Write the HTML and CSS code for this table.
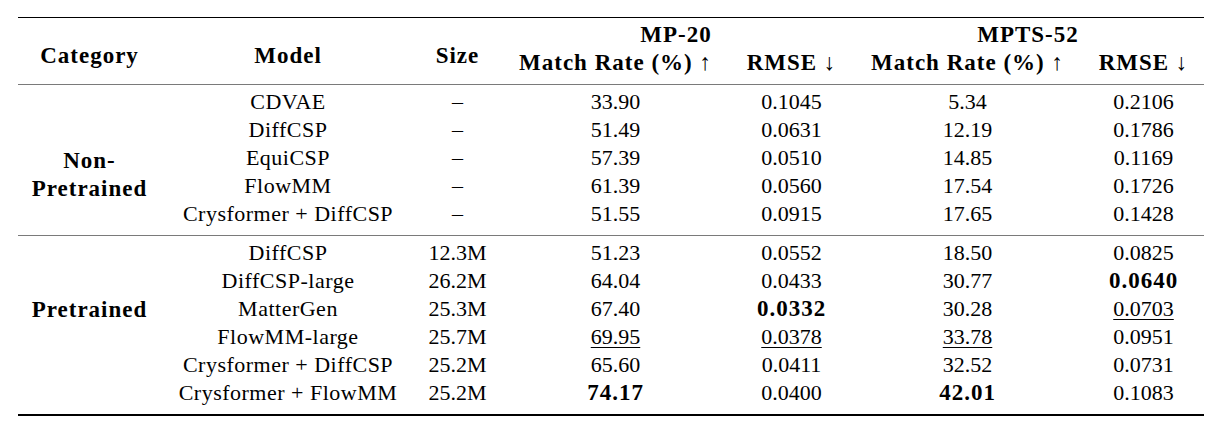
FILE: index.html
```html
<!DOCTYPE html>
<html lang="en">
<head>
<meta charset="utf-8">
<title>Results</title>
<link rel="stylesheet" href="styles.css">
</head>
<body>
<table class="results">
  <colgroup>
    <col class="c-cat"><col class="c-model"><col class="c-size">
    <col class="c-mr"><col class="c-rmse"><col class="c-mr"><col class="c-rmse">
  </colgroup>
  <thead>
    <tr class="hr1">
      <th rowspan="2" class="hspan">Category</th>
      <th rowspan="2" class="hspan">Model</th>
      <th rowspan="2" class="hspan">Size</th>
      <th colspan="2">MP-20</th>
      <th colspan="2">MPTS-52</th>
    </tr>
    <tr class="hr2">
      <th>Match Rate (%) ↑</th>
      <th>RMSE ↓</th>
      <th>Match Rate (%) ↑</th>
      <th>RMSE ↓</th>
    </tr>
  </thead>
  <tbody class="grp grp-non">
    <tr class="first">
      <td rowspan="5" class="cat cat-non">Non-<br>Pretrained</td>
      <td class="model">CDVAE</td><td class="size">–</td>
      <td>33.90</td><td>0.1045</td><td>5.34</td><td>0.2106</td>
    </tr>
    <tr>
      <td class="model">DiffCSP</td><td class="size">–</td>
      <td>51.49</td><td>0.0631</td><td>12.19</td><td>0.1786</td>
    </tr>
    <tr>
      <td class="model">EquiCSP</td><td class="size">–</td>
      <td>57.39</td><td>0.0510</td><td>14.85</td><td>0.1169</td>
    </tr>
    <tr>
      <td class="model">FlowMM</td><td class="size">–</td>
      <td>61.39</td><td>0.0560</td><td>17.54</td><td>0.1726</td>
    </tr>
    <tr class="last">
      <td class="model">Crysformer + DiffCSP</td><td class="size">–</td>
      <td>51.55</td><td>0.0915</td><td>17.65</td><td>0.1428</td>
    </tr>
  </tbody>
  <tbody class="grp grp-pre">
    <tr class="first">
      <td rowspan="6" class="cat cat-pre">Pretrained</td>
      <td class="model">DiffCSP</td><td class="size">12.3M</td>
      <td>51.23</td><td>0.0552</td><td>18.50</td><td>0.0825</td>
    </tr>
    <tr>
      <td class="model">DiffCSP-large</td><td class="size">26.2M</td>
      <td>64.04</td><td>0.0433</td><td>30.77</td><td><b class="best">0.0640</b></td>
    </tr>
    <tr>
      <td class="model">MatterGen</td><td class="size">25.3M</td>
      <td>67.40</td><td><b class="best">0.0332</b></td><td>30.28</td><td><span class="second">0.0703</span></td>
    </tr>
    <tr>
      <td class="model">FlowMM-large</td><td class="size">25.7M</td>
      <td><span class="second">69.95</span></td><td><span class="second">0.0378</span></td><td><span class="second">33.78</span></td><td>0.0951</td>
    </tr>
    <tr>
      <td class="model">Crysformer + DiffCSP</td><td class="size">25.2M</td>
      <td>65.60</td><td>0.0411</td><td>32.52</td><td>0.0731</td>
    </tr>
    <tr class="last">
      <td class="model">Crysformer + FlowMM</td><td class="size">25.2M</td>
      <td><b class="best">74.17</b></td><td>0.0400</td><td><b class="best">42.01</b></td><td>0.1083</td>
    </tr>
  </tbody>
</table>
</body>
</html>
```

FILE: styles.css
```css
html, body {
  margin: 0;
  padding: 0;
  background: #ffffff;
}

body {
  font-family: "Liberation Serif", "Times New Roman", serif;
  font-size: 22px;
  color: #000;
}

.results {
  margin: 17px 0 0 18px;
  width: 1186px;
  table-layout: fixed;
  border-collapse: collapse;
  border-top: 1.5px solid #000;
  border-bottom: 2px solid #000;
}

.c-cat { width: 143px; }
.c-model { width: 254px; }
.c-size { width: 85px; }
.c-mr { width: 231px; }
.c-rmse { width: 121px; }

.results th,
.results td {
  padding: 0;
  line-height: 28px;
  text-align: center;
  vertical-align: middle;
  white-space: nowrap;
}

.results th {
  font-weight: 700;
  font-size: 23px;
  letter-spacing: 1px;
}

.results thead {
  border-bottom: 1px solid #7a7a7a;
}

.hr1 th { padding-top: 3px; }
.hr2 th { padding-bottom: 7px; }
.hr1 th.hspan { padding-top: 10px; }

.grp-non {
  border-bottom: 1px solid #7a7a7a;
}

.grp .first td { padding-top: 3px; }
.grp-non .last td { padding-bottom: 7px; }
.grp-pre .last td { padding-bottom: 7px; }

.results td.model {
  letter-spacing: 0.5px;
}

.results td.cat {
  font-weight: 700;
  font-size: 23px;
  letter-spacing: 1px;
  line-height: 28px;
}

.results td.cat-non { padding-top: 30px; }
.results td.cat-pre { padding-top: 0; padding-bottom: 31px; }

.best {
  font-weight: 700;
  font-size: 23px;
  letter-spacing: 1px;
}

.second {
  text-decoration: underline;
  text-decoration-thickness: 1px;
  text-underline-offset: 3px;
}
```
